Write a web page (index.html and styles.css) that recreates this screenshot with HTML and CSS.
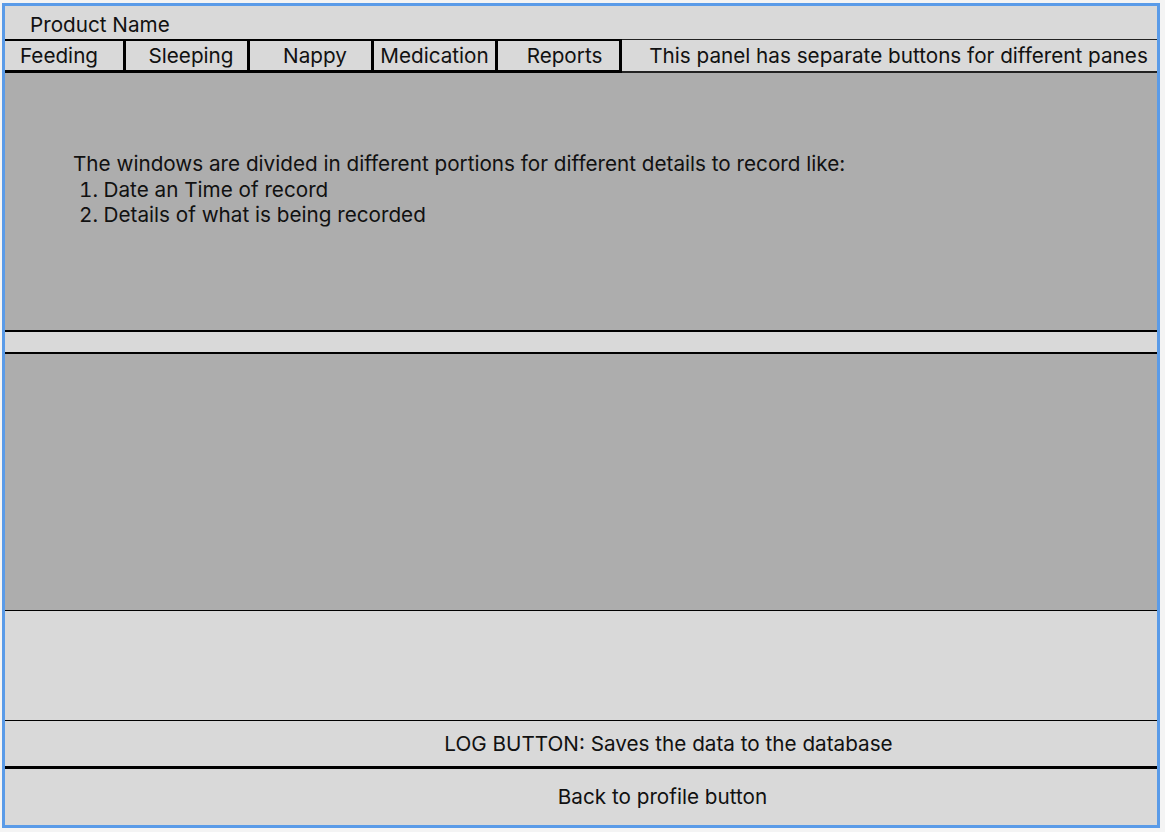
FILE: index.html
```html
<!DOCTYPE html>
<html lang="en">
<head>
<meta charset="utf-8">
<title>Product Name</title>
<link rel="stylesheet" href="styles.css">
</head>
<body>
<div class="frame">
  <div class="header">Product Name</div>
  <div class="tabs">
    <div class="tab tab-first">Feeding</div>
    <div class="tab tab-shift">Sleeping</div>
    <div class="tab tab-shift">Nappy</div>
    <div class="tab">Medication</div>
    <div class="tab tab-shift-more">Reports</div>
    <div class="tab-note">This panel has separate buttons for different panes</div>
  </div>
  <div class="pane pane-top">
    <p class="pane-text">The windows are divided in different portions for different details to record like:</p>
    <ol class="pane-list">
      <li>Date an Time of record</li>
      <li>Details of what is being recorded</li>
    </ol>
  </div>
  <div class="strip"></div>
  <div class="pane pane-mid"></div>
  <div class="blank"></div>
  <div class="row row-log">LOG BUTTON: Saves the data to the database</div>
  <div class="row row-back">Back to profile button</div>
</div>
</body>
</html>
```

FILE: styles.css
```css
* { box-sizing: border-box; }
html, body { margin: 0; padding: 0; }
body {
  background: #f4f4f4;
  font-family: Inter, "Noto Sans", sans-serif;
  font-size: 20.7px;
  color: #111;
  width: 1165px;
  height: 832px;
  overflow: hidden;
}
.frame {
  margin: 3px 0 0 2px;
  width: 1158px;
  height: 825px;
  border: 3px solid #5a9be8;
  background: #d9d9d9;
  display: flex;
  flex-direction: column;
}
.header {
  height: 33px;
  padding-left: 25px;
  line-height: 37px;
  flex: none;
}
.tabs {
  display: flex;
  height: 34px;
  flex: none;
}
.tab {
  width: 124px;
  border-top: 2px solid #000;
  border-bottom: 3px solid #000;
  border-right: 3px solid #000;
  text-align: center;
  line-height: 30px;
}
.tab-first { width: 121px; padding-right: 10px; }
.tab-shift { padding-left: 9px; }
.tab-shift-more { padding-left: 12px; }
.tab-note {
  flex: 1;
  border-top: 1px solid #222;
  border-bottom: 2px solid #222;
  text-align: center;
  padding-left: 18px;
  line-height: 31px;
}
.pane {
  background: #adadad;
  flex: none;
}
.pane-top {
  height: 257px;
  padding: 78px 0 0 68px;
}
.pane-text {
  margin: 0;
  line-height: 25.5px;
}
.pane-list {
  margin: 0;
  padding: 0 0 0 6px;
  list-style-position: inside;
  line-height: 25.5px;
}
.strip {
  height: 24px;
  border-top: 2px solid #000;
  border-bottom: 2px solid #000;
  flex: none;
}
.pane-mid {
  height: 256px;
}
.blank {
  height: 111px;
  border-top: 1px solid #000;
  border-bottom: 1px solid #000;
  flex: none;
}
.row {
  text-align: center;
  flex: none;
}
.row-log {
  height: 48px;
  padding-left: 175px;
  line-height: 46px;
  border-bottom: 3px solid #000;
}
.row-back {
  flex: 1;
  padding-left: 163px;
  line-height: 56px;
}
```
